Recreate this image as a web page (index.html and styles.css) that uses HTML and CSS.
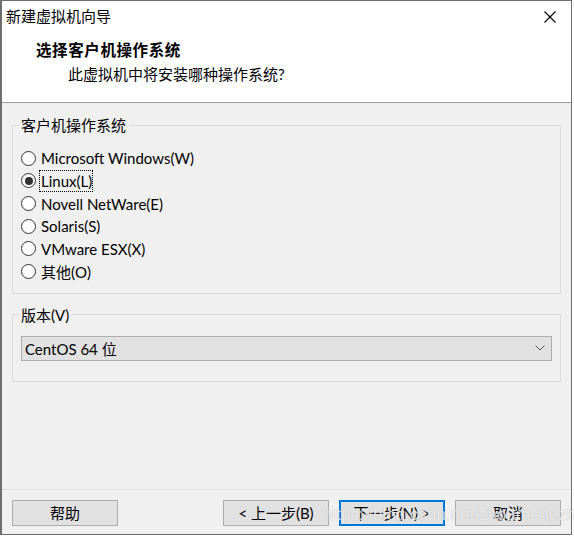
FILE: index.html
```html
<!DOCTYPE html>
<html lang="zh-CN">
<head>
<meta charset="utf-8">
<title>新建虚拟机向导</title>
<link rel="stylesheet" href="styles.css">
</head>
<body>
<div class="window">
  <div class="header">
    <div class="titlebar">
      <span class="title">新建虚拟机向导</span>
      <svg class="close" width="12" height="12" viewBox="0 0 12 12"><path d="M0.5 0.5 L11.5 11.5 M11.5 0.5 L0.5 11.5" stroke="#000" stroke-width="1.1" fill="none"/></svg>
    </div>
    <div class="heading">选择客户机操作系统</div>
    <div class="subtitle">此虚拟机中将安装哪种操作系统?</div>
  </div>
  <div class="content">
    <fieldset class="group">
      <legend>客户机操作系统</legend>
      <div class="radios">
        <div class="radio"><span class="dot"></span><span class="label">Microsoft Windows(W)</span></div>
        <div class="radio checked"><span class="dot"></span><span class="label focus">Linux(L)</span></div>
        <div class="radio"><span class="dot"></span><span class="label">Novell NetWare(E)</span></div>
        <div class="radio"><span class="dot"></span><span class="label">Solaris(S)</span></div>
        <div class="radio"><span class="dot"></span><span class="label">VMware ESX(X)</span></div>
        <div class="radio"><span class="dot"></span><span class="label">其他(O)</span></div>
      </div>
    </fieldset>
    <fieldset class="group group-version">
      <legend>版本(V)</legend>
      <div class="select">
        <span>CentOS 64 位</span>
        <svg class="chev" width="10" height="6" viewBox="0 0 10 6"><path d="M0.5 0.5 L5 5 L9.5 0.5" stroke="#555" stroke-width="1" fill="none"/></svg>
      </div>
    </fieldset>
  </div>
  <div class="footer">
    <button class="btn">帮助</button>
    <div class="spacer"></div>
    <button class="btn">&lt; 上一步(B)</button>
    <button class="btn default">下一步(N) &gt;</button>
    <button class="btn">取消</button>
  </div>
  <div class="watermark">https://blog.csdn.net/zhoumengzhe</div>
</div>
</body>
</html>
```
FILE: styles.css
```css
* { box-sizing: border-box; }
html, body { margin: 0; padding: 0; background: #fff; }
body {
  font-family: "Segoe UI", Lato, "Noto Sans CJK SC", sans-serif;
  font-size: 15px;
  color: #000;
}
.window {
  position: relative;
  width: 572px;
  height: 535px;
  border: 1px solid #6e6e6e;
  border-left-width: 2px;
  display: flex;
  flex-direction: column;
  background: #f0f0f0;
}
.header {
  background: #fff;
  height: 102px;
  border-bottom: 1px solid #a0a0a0;
  flex: none;
}
.titlebar {
  height: 31px;
  display: flex;
  align-items: center;
  justify-content: space-between;
  padding: 0 15px 0 4px;
}
.title { font-size: 15px; line-height: 20px; margin-top: -1px; }
.close { display: block; }
.heading {
  font-weight: bold;
  font-size: 15.5px;
  line-height: 22px;
  padding-left: 34px;
  margin-top: 7px;
  letter-spacing: 0.6px;
}
.subtitle {
  padding-left: 66px;
  line-height: 20px;
  margin-top: 3px;
}
.content {
  flex: 1;
  padding: 12px 10px 0 10px;
  display: flex;
  flex-direction: column;
}
.group {
  margin: 0;
  border: 1px solid #dcdcdc;
  padding: 12px 8px 10px 8px;
  min-width: 0;
}
.group legend {
  padding: 0 3px;
  margin-left: -3px;
  line-height: 20px;
}
.radios { display: flex; flex-direction: column; }
.radio {
  height: 22.67px;
  display: flex;
  align-items: center;
  gap: 5px;
}
.dot {
  width: 15px;
  height: 15px;
  border: 1px solid #333;
  border-radius: 50%;
  background: #fff;
  display: flex;
  align-items: center;
  justify-content: center;
  flex: none;
}
.checked .dot::after {
  content: "";
  width: 8px;
  height: 8px;
  border-radius: 50%;
  background: #333;
}
.label { line-height: 20px; }
.label.focus { outline: 1px dotted #000; outline-offset: 0; margin-left: -1px; padding-left: 1px; }
.group-version { margin-top: 11px; padding: 11px 8px 20px 8px; }
.select {
  height: 25px;
  border: 1px solid #adadad;
  background: #e1e1e1;
  display: flex;
  align-items: center;
  justify-content: space-between;
  padding: 0 6px 0 3px;
}
.chev { display: block; }
.footer {
  flex: none;
  margin-top: auto;
  border-top: 1px solid #dfdfdf;
  padding: 10px 10px 8px 10px;
  display: flex;
  gap: 10px;
}
.spacer { flex: 1; }
.btn {
  width: 106px;
  height: 26px;
  border: 1px solid #adadad;
  background: #e1e1e1;
  font-family: inherit;
  font-size: 15px;
  color: #000;
  padding: 0;
  line-height: 22px;
}
.btn.default {
  border-color: #0078d7;
  box-shadow: inset 0 0 0 1px #0078d7;
}
.watermark {
  position: absolute;
  left: 320px;
  top: 504px;
  font-family: "Liberation Sans", sans-serif;
  font-size: 17px;
  color: rgba(255,255,255,0.7);
  text-shadow: 0 0 1px rgba(120,120,120,0.45);
  pointer-events: none;
  white-space: nowrap;
}
```
